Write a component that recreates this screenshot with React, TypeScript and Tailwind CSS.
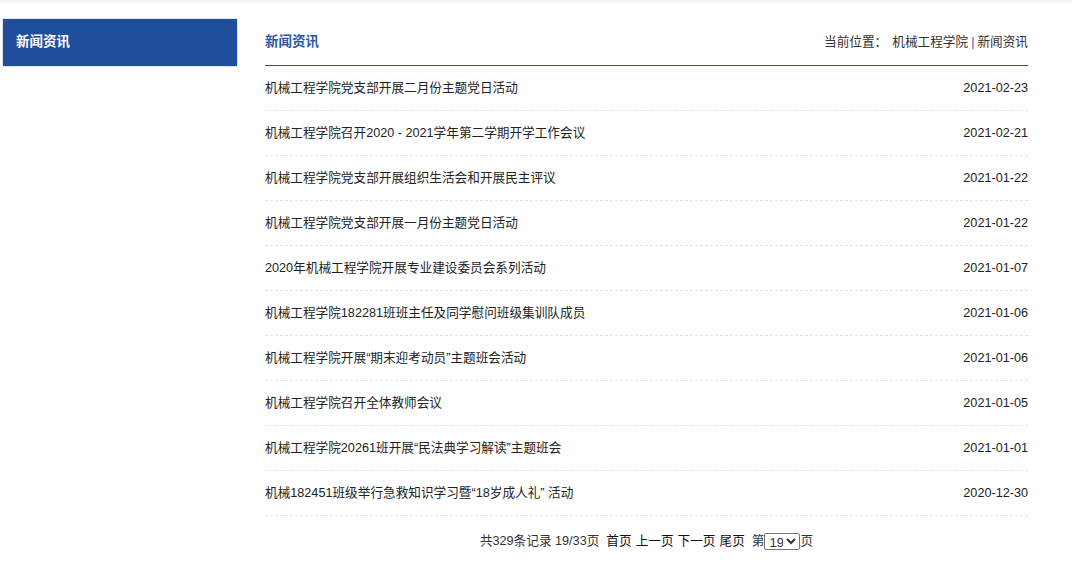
import React from 'react';

const news = [
  { title: '机械工程学院党支部开展二月份主题党日活动', date: '2021-02-23' },
  { title: '机械工程学院召开2020 - 2021学年第二学期开学工作会议', date: '2021-02-21' },
  { title: '机械工程学院党支部开展组织生活会和开展民主评议', date: '2021-01-22' },
  { title: '机械工程学院党支部开展一月份主题党日活动', date: '2021-01-22' },
  { title: '2020年机械工程学院开展专业建设委员会系列活动', date: '2021-01-07' },
  { title: '机械工程学院182281班班主任及同学慰问班级集训队成员', date: '2021-01-06' },
  { title: '机械工程学院开展“期末迎考动员”主题班会活动', date: '2021-01-06' },
  { title: '机械工程学院召开全体教师会议', date: '2021-01-05' },
  { title: '机械工程学院20261班开展“民法典学习解读”主题班会', date: '2021-01-01' },
  { title: '机械182451班级举行急救知识学习暨“18岁成人礼” 活动', date: '2020-12-30' },
];

const pages = Array.from({ length: 33 }, (_, i) => i + 1);

export default function App() {
  return (
    <div
      className="w-[1072px] min-h-[574px] bg-white text-[12.65px] text-[#333333]"
      style={{ fontFamily: '"Liberation Sans", "Noto Sans CJK SC", sans-serif' }}
    >
      {/* top shadow */}
      <div className="h-[4px] bg-gradient-to-b from-[#ececec] to-white" />

      <div className="flex">
        {/* Sidebar */}
        <div className="ml-[2px] mt-[14px] w-[236px] h-[49px] border border-[#e6e6e6] bg-[#1f4e9c] flex items-center px-[13px]">
          <span className="text-white text-[13.5px] font-bold">新闻资讯</span>
        </div>

        {/* Main content */}
        <div className="ml-[27px] mt-[15px] w-[763px]">
          <div className="h-[47px] flex items-center justify-between border-b border-[#2b4f9a]">
            <span className="text-[13.5px] font-bold text-[#2b56a3]">新闻资讯</span>
            <span className="text-[#333333]">
              当前位置：<span className="ml-[5px]">机械工程学院</span>
              <span className="text-[#2b56a3] mx-[3px]">|</span>新闻资讯
            </span>
          </div>

          <ul>
            {news.map((item, i) => (
              <li
                key={i}
                className="h-[45px] flex items-center justify-between border-b border-dashed border-[#e4e4e4]"
              >
                <span className="text-[#222222]">{item.title}</span>
                <span className="text-[#222222]">{item.date}</span>
              </li>
            ))}
          </ul>

          <div className="h-[50px] flex items-center justify-center text-[#333333]">
            <span>共329条记录 19/33页</span>
            <span className="ml-[7px] text-[#111111]">首页</span>
            <span className="ml-[4px] text-[#111111]">上一页</span>
            <span className="ml-[4px] text-[#111111]">下一页</span>
            <span className="ml-[4px] text-[#111111]">尾页</span>
            <span className="ml-[7px]">第</span>
            <select
              defaultValue={19}
              className="h-[17px] w-[36px] border border-[#767676] rounded-[2px] text-[13px] leading-none px-0 bg-white"
            >
              {pages.map((p) => (
                <option key={p} value={p}>
                  {p}
                </option>
              ))}
            </select>
            <span>页</span>
          </div>
        </div>
      </div>
    </div>
  );
}
